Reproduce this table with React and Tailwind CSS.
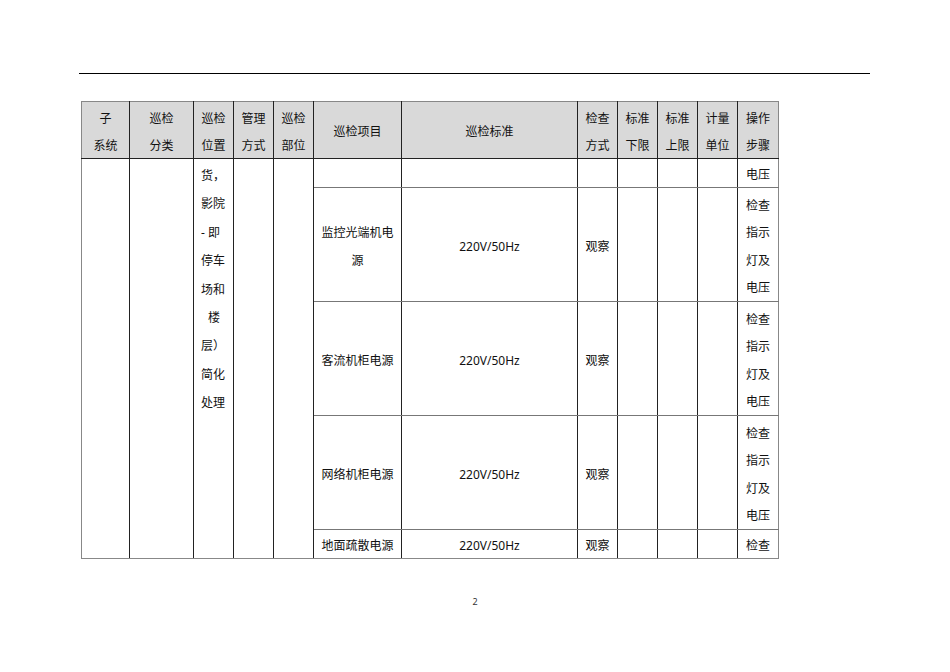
const cell = "border border-[#222] text-center align-middle p-0";

const rows = [
  { item: ["监控光端机电", "源"], std: "220V/50Hz", how: "观察", step: ["检查", "指示", "灯及", "电压"] },
  { item: ["客流机柜电源"], std: "220V/50Hz", how: "观察", step: ["检查", "指示", "灯及", "电压"] },
  { item: ["网络机柜电源"], std: "220V/50Hz", how: "观察", step: ["检查", "指示", "灯及", "电压"] },
];

const headers = [
  ["子", "系统"],
  ["巡检", "分类"],
  ["巡检", "位置"],
  ["管理", "方式"],
  ["巡检", "部位"],
  ["巡检项目"],
  ["巡检标准"],
  ["检查", "方式"],
  ["标准", "下限"],
  ["标准", "上限"],
  ["计量", "单位"],
  ["操作", "步骤"],
];

const location = ["货，", "影院", "- 即", "停车", "场和", "楼", "层）", "简化", "处理"];

// text sits a little low in its line, as in the printed document
function Lines({ lines }) {
  return (
    <div className="relative top-[2px]">
      {lines.map((l, i) => (
        <div key={i}>{l}</div>
      ))}
    </div>
  );
}

export default function App() {
  return (
    <div
      className="w-[950px] h-[672px] bg-white text-[12px] leading-[27.5px] text-[#111] overflow-hidden"
      style={{ fontFamily: '"Noto Sans", "Noto Sans CJK SC", sans-serif' }}
    >
      <div className="pt-[73px] pl-[79px]">
        <div className="w-[791px] h-px bg-black"></div>
      </div>

      <div className="pt-[27px] pl-[81px]">
        <table className="table-fixed border-collapse w-[697px] border border-[#888]">
          <colgroup>
            <col className="w-[48px]" />
            <col className="w-[64px]" />
            <col className="w-[40px]" />
            <col className="w-[40px]" />
            <col className="w-[40px]" />
            <col className="w-[88px]" />
            <col className="w-[176px]" />
            <col className="w-[40px]" />
            <col className="w-[40px]" />
            <col className="w-[40px]" />
            <col className="w-[40px]" />
            <col className="w-[41px]" />
          </colgroup>
          <thead>
            <tr className="h-[57px] bg-[#d9d9d9]">
              {headers.map((h, i) => (
                <th
                  key={i}
                  className={`${cell} font-normal ${i === 0 ? "border-l-[#888]" : ""} ${i === 11 ? "border-l-[#888] border-r-[#888]" : ""} ${i === 5 ? "border-l-[#888]" : ""} border-t-[#888]`}
                >
                  <Lines lines={h} />
                </th>
              ))}
            </tr>
          </thead>
          <tbody>
            <tr className="h-[29px]">
              <td rowSpan={5} className={`${cell} border-l-[#888] border-b-[#888]`}></td>
              <td rowSpan={5} className={`${cell} border-b-[#888]`}></td>
              <td rowSpan={5} className={`${cell} border-b-[#888] !align-top !text-left pl-[7px]`}>
                <div className="relative top-[3px]">
                  {location.map((l, i) => (
                    <div key={i} className={`leading-[28.4px] ${l === "楼" ? "pl-[7px]" : ""}`}>
                      {l}
                    </div>
                  ))}
                </div>
              </td>
              <td rowSpan={5} className={`${cell} border-b-[#888]`}></td>
              <td rowSpan={5} className={`${cell} border-b-[#888]`}></td>
              <td className={`${cell} border-l-[#888] border-b-[#777]`}></td>
              <td className={`${cell} border-b-[#777]`}></td>
              <td className={`${cell} border-b-[#777]`}></td>
              <td className={`${cell} border-b-[#777]`}></td>
              <td className={`${cell} border-b-[#777]`}></td>
              <td className={`${cell} border-b-[#777]`}></td>
              <td className={`${cell} border-l-[#888] border-r-[#888] border-b-[#777]`}>
                <Lines lines={["电压"]} />
              </td>
            </tr>
            {rows.map((r, i) => (
              <tr key={i} className="h-[114px]">
                <td className={`${cell} border-l-[#888] border-b-[#777]`}>
                  <Lines lines={r.item} />
                </td>
                <td className={`${cell} border-b-[#777]`}>
                  <Lines lines={[r.std]} />
                </td>
                <td className={`${cell} border-b-[#777]`}>
                  <Lines lines={[r.how]} />
                </td>
                <td className={`${cell} border-b-[#777]`}></td>
                <td className={`${cell} border-b-[#777]`}></td>
                <td className={`${cell} border-b-[#777]`}></td>
                <td className={`${cell} border-l-[#888] border-r-[#888] border-b-[#777]`}>
                  <Lines lines={r.step} />
                </td>
              </tr>
            ))}
            <tr className="h-[28px]">
              <td className={`${cell} border-l-[#888] border-b-[#888]`}>
                <Lines lines={["地面疏散电源"]} />
              </td>
              <td className={`${cell} border-b-[#888]`}>
                <Lines lines={["220V/50Hz"]} />
              </td>
              <td className={`${cell} border-b-[#888]`}>
                <Lines lines={["观察"]} />
              </td>
              <td className={`${cell} border-b-[#888]`}></td>
              <td className={`${cell} border-b-[#888]`}></td>
              <td className={`${cell} border-b-[#888]`}></td>
              <td className={`${cell} border-l-[#888] border-r-[#888] border-b-[#888]`}>
                <Lines lines={["检查"]} />
              </td>
            </tr>
          </tbody>
        </table>
      </div>

      <div className="pt-[37px] text-center text-[9px] leading-[12px] text-[#333]">2</div>
    </div>
  );
}
